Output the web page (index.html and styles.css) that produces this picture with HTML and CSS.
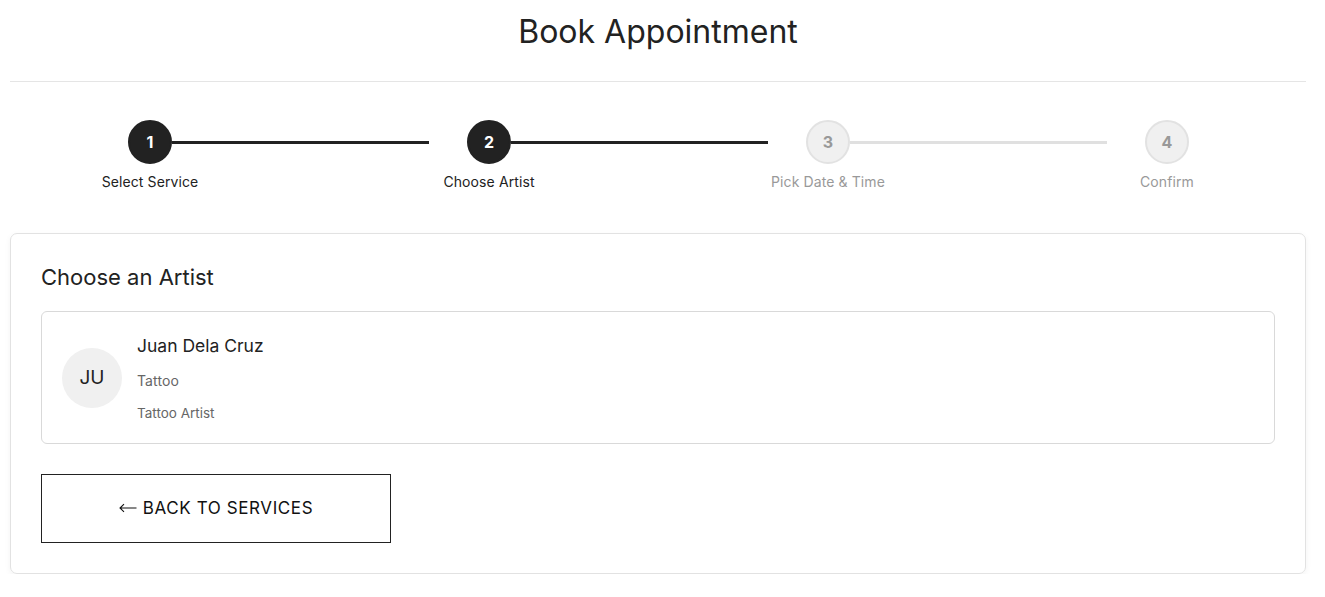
FILE: index.html
```html
<!DOCTYPE html>
<html lang="en">
<head>
<meta charset="utf-8">
<title>Book Appointment</title>
<link rel="stylesheet" href="styles.css">
</head>
<body>
<div class="page">
  <header class="header">
    <h1 class="title">Book Appointment</h1>
  </header>

  <div class="stepper">
    <div class="step">
      <div class="node">
        <div class="circle done">1</div>
        <div class="label done">Select Service</div>
      </div>
      <div class="connector done"></div>
    </div>
    <div class="step">
      <div class="node">
        <div class="circle done">2</div>
        <div class="label done">Choose Artist</div>
      </div>
      <div class="connector done"></div>
    </div>
    <div class="step">
      <div class="node">
        <div class="circle">3</div>
        <div class="label">Pick Date &amp; Time</div>
      </div>
      <div class="connector"></div>
    </div>
    <div class="step">
      <div class="node">
        <div class="circle">4</div>
        <div class="label">Confirm</div>
      </div>
    </div>
  </div>

  <section class="card">
    <h2 class="card-title">Choose an Artist</h2>
    <div class="artist">
      <div class="avatar">JU</div>
      <div class="artist-info">
        <div class="artist-name">Juan Dela Cruz</div>
        <div class="artist-service">Tattoo</div>
        <div class="artist-role">Tattoo Artist</div>
      </div>
    </div>
    <button class="back-btn" type="button"><svg class="arrow" width="18" height="10" viewBox="0 0 18 10" aria-hidden="true"><path d="M17.5 5H1M5 1.2L1 5l4 3.8" fill="none" stroke="#111" stroke-width="1.1"/></svg><span>BACK TO SERVICES</span></button>
  </section>
</div>
</body>
</html>
```

FILE: styles.css
```css
* { box-sizing: border-box; }

html, body {
  margin: 0;
  padding: 0;
  background: #fff;
}

body {
  font-family: Inter, "Noto Sans", "Liberation Sans", sans-serif;
  color: #222;
}

.page {
  width: 1296px;
  margin-left: 10px;
}

.header {
  padding: 12px 0 29px;
  border-bottom: 1px solid #e5e5e5;
}

.title {
  margin: 0;
  text-align: center;
  font-size: 32px;
  line-height: 40px;
  font-weight: 400;
  color: #222;
}

.stepper {
  display: flex;
  padding-left: 80px;
  margin-top: 38px;
}

.step {
  display: flex;
  align-items: flex-start;
}

.node {
  width: 120px;
  display: flex;
  flex-direction: column;
  align-items: center;
  position: relative;
  z-index: 1;
}

.circle {
  width: 44px;
  height: 44px;
  border-radius: 50%;
  display: flex;
  align-items: center;
  justify-content: center;
  font-size: 16px;
  font-weight: 700;
  background: #f0f0f0;
  border: 2px solid #e2e2e2;
  color: #999;
}

.circle.done {
  background: #222;
  border-color: #222;
  color: #fff;
}

.label {
  margin-top: 8px;
  font-size: 14px;
  letter-spacing: 0.1px;
  line-height: 20px;
  color: #999;
  white-space: nowrap;
}

.label.done {
  color: #222;
}

.connector {
  width: 257px;
  height: 3px;
  margin-left: -38px;
  margin-top: 21px;
  background: #e0e0e0;
}

.connector.done {
  background: #222;
}

.card {
  margin-top: 41px;
  border: 1px solid #e2e2e2;
  border-radius: 7px;
  padding: 30px;
  box-shadow: 0 2px 6px rgba(0, 0, 0, 0.05);
}

.card-title {
  margin: 0 0 21px;
  font-size: 22px;
  line-height: 26px;
  font-weight: 400;
  color: #222;
}

.artist {
  display: flex;
  align-items: center;
  gap: 15px;
  border: 1px solid #d9d9d9;
  border-radius: 6px;
  padding: 20px;
}

.avatar {
  width: 60px;
  height: 60px;
  border-radius: 50%;
  background: #f0f0f0;
  display: flex;
  align-items: center;
  justify-content: center;
  font-size: 19px;
  color: #222;
}

.artist-info {
  display: flex;
  flex-direction: column;
}

.artist-name {
  font-size: 17.5px;
  line-height: 28px;
  color: #222;
  margin-bottom: 11px;
}

.artist-service {
  font-size: 14px;
  letter-spacing: 0.1px;
  line-height: 20px;
  color: #666;
  margin-bottom: 12px;
}

.artist-role {
  font-size: 13.5px;
  line-height: 20px;
  color: #666;
}

.back-btn {
  display: flex;
  align-items: center;
  justify-content: center;
  gap: 6px;
  margin-top: 30px;
  width: 350px;
  height: 69px;
  padding: 0 0 2px;
  background: #fff;
  border: 1px solid #222;
  border-radius: 0;
  font-family: Inter, "Noto Sans", "Liberation Sans", sans-serif;
  font-size: 17px;
  letter-spacing: 0.6px;
  color: #111;
  cursor: pointer;
}

.arrow {
  display: block;
  flex: none;
  margin-top: 1px;
}
```
